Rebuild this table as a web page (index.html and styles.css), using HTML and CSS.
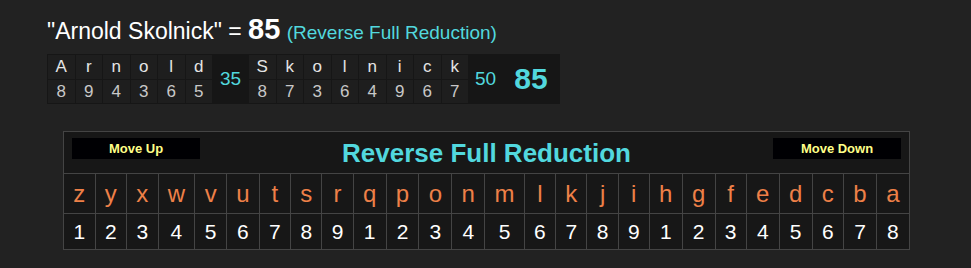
FILE: index.html
```html
<!DOCTYPE html>
<html>
<head>
<meta charset="utf-8">
<link rel="stylesheet" href="styles.css">
</head>
<body>
<div class="page">
  <div class="title">"Arnold Skolnick" = <span class="big">85</span> <span class="cipher">(Reverse Full Reduction)</span></div>
  <table class="calc">
    <tr>
      <td class="ch">A</td><td class="ch">r</td><td class="ch">n</td><td class="ch">o</td><td class="ch">l</td><td class="ch">d</td>
      <td class="sum s35" rowspan="2">35</td>
      <td class="ch">S</td><td class="ch">k</td><td class="ch">o</td><td class="ch">l</td><td class="ch">n</td><td class="ch">i</td><td class="ch">c</td><td class="ch">k</td>
      <td class="sum s50" rowspan="2">50</td>
      <td class="total" rowspan="2">85</td>
    </tr>
    <tr>
      <td class="num">8</td><td class="num">9</td><td class="num">4</td><td class="num">3</td><td class="num">6</td><td class="num">5</td>
      <td class="num">8</td><td class="num">7</td><td class="num">3</td><td class="num">6</td><td class="num">4</td><td class="num">9</td><td class="num">6</td><td class="num">7</td>
    </tr>
  </table>

  <table class="chart">
    <tr>
      <td class="head" colspan="26">
        <div class="headrow">
          <button class="btn">Move Up</button>
          <div class="ctitle">Reverse Full Reduction</div>
          <button class="btn">Move Down</button>
        </div>
      </td>
    </tr>
    <tr class="letters">
      <td>z</td><td>y</td><td>x</td><td>w</td><td>v</td><td>u</td><td>t</td><td>s</td><td>r</td><td>q</td><td>p</td><td>o</td><td>n</td><td>m</td><td>l</td><td>k</td><td>j</td><td>i</td><td>h</td><td>g</td><td>f</td><td>e</td><td>d</td><td>c</td><td>b</td><td>a</td>
    </tr>
    <tr class="digits">
      <td>1</td><td>2</td><td>3</td><td>4</td><td>5</td><td>6</td><td>7</td><td>8</td><td>9</td><td>1</td><td>2</td><td>3</td><td>4</td><td>5</td><td>6</td><td>7</td><td>8</td><td>9</td><td>1</td><td>2</td><td>3</td><td>4</td><td>5</td><td>6</td><td>7</td><td>8</td>
    </tr>
  </table>
</div>
</body>
</html>
```

FILE: styles.css
```css
html, body {
  margin: 0;
  padding: 0;
  background: #222222;
  font-family: "Liberation Sans", Arial, sans-serif;
}

.page {
  padding-top: 14px;
}

.title {
  margin-left: 47px;
  font-size: 23px;
  line-height: 30px;
  color: #ffffff;
}

.title .big {
  font-size: 29px;
  font-weight: bold;
}

.title .cipher {
  font-size: 19px;
  color: #52d8de;
}

.calc {
  margin-left: 47px;
  margin-top: 6px;
  border-collapse: separate;
  border-spacing: 1px;
  background: #161616;
}

.calc td {
  padding: 0;
  text-align: center;
}

.calc .ch,
.calc .num {
  width: 26.5px;
  background: #1e1e1e;
  font-size: 17px;
}

.calc .ch {
  height: 24px;
  color: #e4e4e4;
}

.calc .num {
  height: 23px;
  color: #c8c8c8;
}

.calc .sum {
  color: #52d8de;
  font-size: 19px;
}

.calc .s35 {
  width: 35px;
}

.calc .s50 {
  width: 33px;
}

.calc .total {
  width: 56px;
  color: #52d8de;
  font-size: 30px;
  font-weight: bold;
}

.chart {
  margin-left: 63px;
  margin-top: 27px;
  width: 847px;
  border-collapse: collapse;
  background: #171717;
}

.chart td {
  border: 1px solid #444444;
  padding: 0 9px;
  text-align: center;
}

.chart .head {
  padding: 6px 8px 5px 8px;
}

.headrow {
  display: flex;
  align-items: flex-start;
}

.btn {
  width: 128px;
  height: 21px;
  border: 0;
  padding: 0;
  background: #000003;
  color: #ffff88;
  font-family: "Liberation Sans", Arial, sans-serif;
  font-size: 13px;
  font-weight: bold;
}

.ctitle {
  flex: 1;
  text-align: center;
  color: #52d8de;
  font-size: 26px;
  font-weight: bold;
  line-height: 30px;
}

.letters td {
  height: 39px;
  font-size: 24px;
  color: #ee8048;
}

.digits td {
  height: 35px;
  font-size: 21px;
  color: #ffffff;
}
```
